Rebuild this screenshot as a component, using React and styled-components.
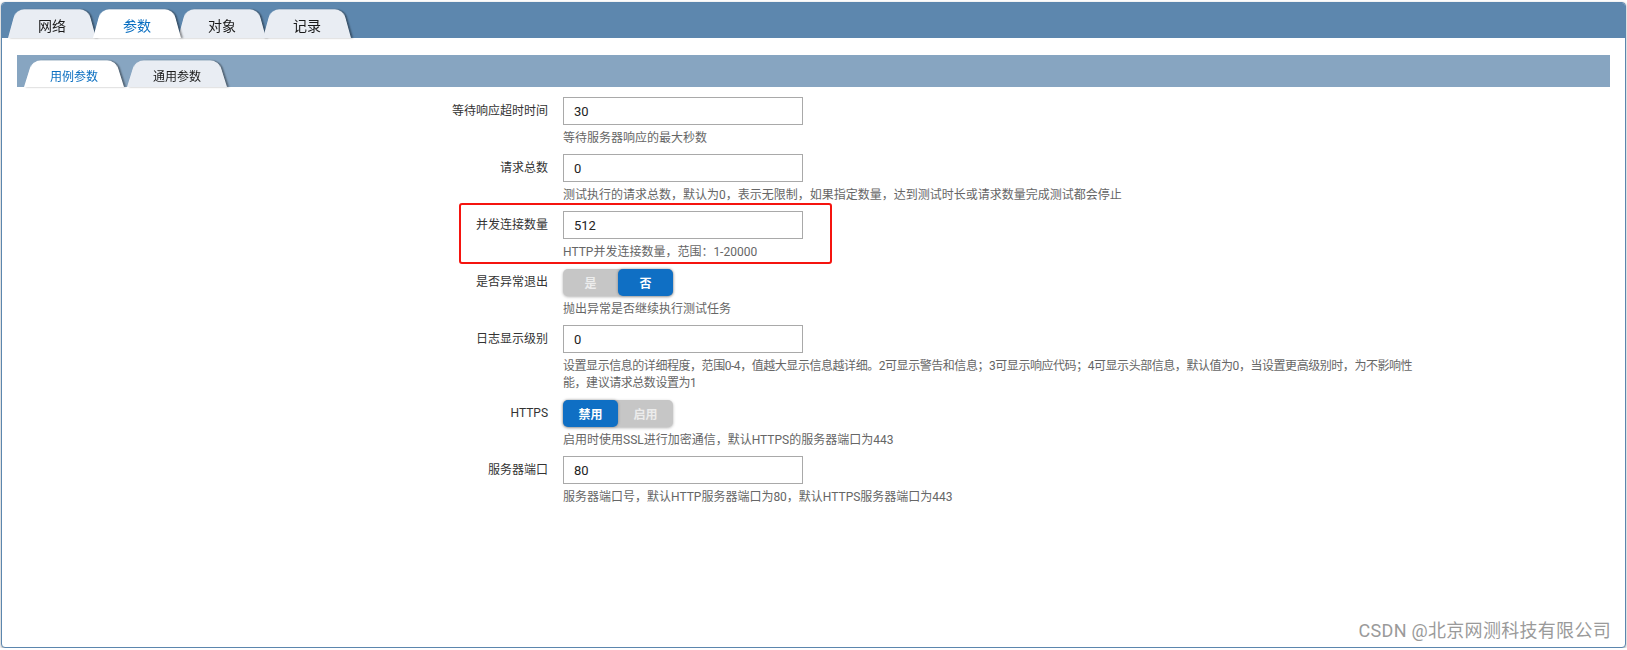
import React from 'react';
import styled, { createGlobalStyle } from 'styled-components';

const GlobalStyle = createGlobalStyle`
  html, body {
    margin: 0;
    padding: 0;
    background: #fff;
  }
  body {
    font-family: Roboto, "Noto Sans CJK SC", sans-serif;
    font-size: 12px;
    color: #333;
  }
  * {
    box-sizing: border-box;
  }
`;

const mainTabs = ['网络', '参数', '对象', '记录'];
const subTabs = ['用例参数', '通用参数'];

const fields = [
  { label: '等待响应超时时间', type: 'input', value: '30', help: '等待服务器响应的最大秒数' },
  { label: '请求总数', type: 'input', value: '0', help: '测试执行的请求总数，默认为0，表示无限制，如果指定数量，达到测试时长或请求数量完成测试都会停止' },
  { label: '并发连接数量', type: 'input', value: '512', help: 'HTTP并发连接数量，范围：1-20000', highlight: true },
  { label: '是否异常退出', type: 'toggle', options: ['是', '否'], active: 1, help: '抛出异常是否继续执行测试任务' },
  { label: '日志显示级别', type: 'input', value: '0', dense: true, help: '设置显示信息的详细程度，范围0-4，值越大显示信息越详细。2可显示警告和信息；3可显示响应代码；4可显示头部信息，默认值为0，当设置更高级别时，为不影响性能，建议请求总数设置为1' },
  { label: 'HTTPS', type: 'toggle', options: ['禁用', '启用'], active: 0, help: '启用时使用SSL进行加密通信，默认HTTPS的服务器端口为443' },
  { label: '服务器端口', type: 'input', value: '80', help: '服务器端口号，默认HTTP服务器端口为80，默认HTTPS服务器端口为443' },
];

const App = () => {
  return (
    <>
      <GlobalStyle />
      <Frame>
        <TopBar>
          {mainTabs.map((t) => (
            <Tab key={t} $active={t === '参数'}>{t}</Tab>
          ))}
        </TopBar>

        <Body>
          <SubBar>
            {subTabs.map((t, i) => (
              <SubTab key={t} $active={i === 0}>{t}</SubTab>
            ))}
          </SubBar>

          <Form>
            {fields.map((f) => (
              <Row key={f.label} $highlight={f.highlight}>
                <Label $toggle={f.type === 'toggle'}>{f.label}</Label>
                <Field>
                  {f.type === 'input' ? (
                    <TextInput defaultValue={f.value} />
                  ) : (
                    <Toggle>
                      {f.options.map((o, i) => (
                        <ToggleOption key={o} $on={i === f.active}>{o}</ToggleOption>
                      ))}
                    </Toggle>
                  )}
                  <Help $dense={f.dense}>{f.help}</Help>
                </Field>
              </Row>
            ))}
          </Form>
        </Body>

        <Watermark>CSDN @北京网测科技有限公司</Watermark>
      </Frame>
    </>
  );
};

export default App;


const Frame = styled.div`
  position: relative;
  margin: 2px 1px 0 1px;
  height: 646px;
  border: 1px solid #5b86ae;
  border-radius: 4px;
  background: #fff;
  box-shadow: 0 1px 3px rgba(0, 0, 0, 0.35);
  overflow: hidden;
`

const TopBar = styled.div`
  display: flex;
  align-items: flex-end;
  height: 35px;
  padding-left: 6px;
  background: #5d87ae;
`

const Tab = styled.div`
  position: relative;
  z-index: ${(p) => (p.$active ? 3 : 1)};
  width: 88px;
  height: 29px;
  margin-right: -3px;
  padding-top: 3px;
  display: flex;
  align-items: center;
  justify-content: center;
  font-size: 14px;
  color: ${(p) => (p.$active ? '#0b6fc1' : '#1a1a1a')};

  &::before {
    content: '';
    position: absolute;
    left: 0;
    right: 0;
    bottom: 0;
    top: -6px;
    z-index: -1;
    background: ${(p) => (p.$active ? '#fff' : '#e9edf3')};
    border-radius: 10px 10px 0 0;
    transform: perspective(14px) rotateX(5deg);
    transform-origin: bottom;
    box-shadow: 2px 0 2px rgba(0, 0, 0, 0.4);
  }
`

const Body = styled.div`
  padding: 17px 15px 0;
`

const SubBar = styled.div`
  display: flex;
  align-items: flex-end;
  height: 32px;
  padding-left: 7px;
  background: #87a5c1;
`

const SubTab = styled(Tab)`
  width: 100px;
  height: 26px;
  margin-right: 3px;
  padding-top: 2px;
  font-size: 12px;
`

const Form = styled.div`
  padding-top: 10px;
`

const Row = styled.div`
  position: relative;
  display: grid;
  grid-template-columns: 531px 850px;
  column-gap: 15px;

  ${(p) => p.$highlight && `
    &::after {
      content: '';
      position: absolute;
      left: 442px;
      top: -8px;
      width: 369px;
      height: 57px;
      border: 2px solid #f5140f;
      border-radius: 3px;
      pointer-events: none;
    }
  `}
`

const Label = styled.div`
  margin-top: ${(p) => (p.$toggle ? '1px' : '0')};
  text-align: right;
  line-height: ${(p) => (p.$toggle ? '27px' : '28px')};
  font-size: 12px;
  color: #333;
`

const Field = styled.div`
  display: flex;
  flex-direction: column;
  align-items: flex-start;
`

const TextInput = styled.input`
  width: 240px;
  height: 28px;
  padding: 0 10px;
  border: 1px solid #a9a9a9;
  border-radius: 0;
  outline: none;
  font-family: Roboto, "Noto Sans CJK SC", sans-serif;
  font-size: 13px;
  color: #222;
`

const Toggle = styled.div`
  display: flex;
  width: 110px;
  height: 27px;
  margin-top: 1px;
  border-radius: 5px;
  background: #c6c6c6;
  box-shadow: 0 1px 3px rgba(0, 0, 0, 0.3);
`

const ToggleOption = styled.div`
  flex: 1;
  display: flex;
  align-items: center;
  justify-content: center;
  border-radius: 5px;
  font-size: 12px;
  font-weight: bold;
  color: ${(p) => (p.$on ? '#fff' : '#ececec')};
  background: ${(p) => (p.$on ? '#0f6fc4' : 'transparent')};
  box-shadow: ${(p) => (p.$on ? '0 0 3px rgba(0, 0, 0, 0.35)' : 'none')};
`

const Help = styled.div`
  margin: 5px 0 7px;
  line-height: 17px;
  font-size: 12px;
  letter-spacing: ${(p) => (p.$dense ? '-0.45px' : '0')};
  color: #666;
`

const Watermark = styled.div`
  position: absolute;
  right: 14px;
  bottom: 5px;
  font-size: 18px;
  letter-spacing: 0.3px;
  color: #9a9a9a;
`
